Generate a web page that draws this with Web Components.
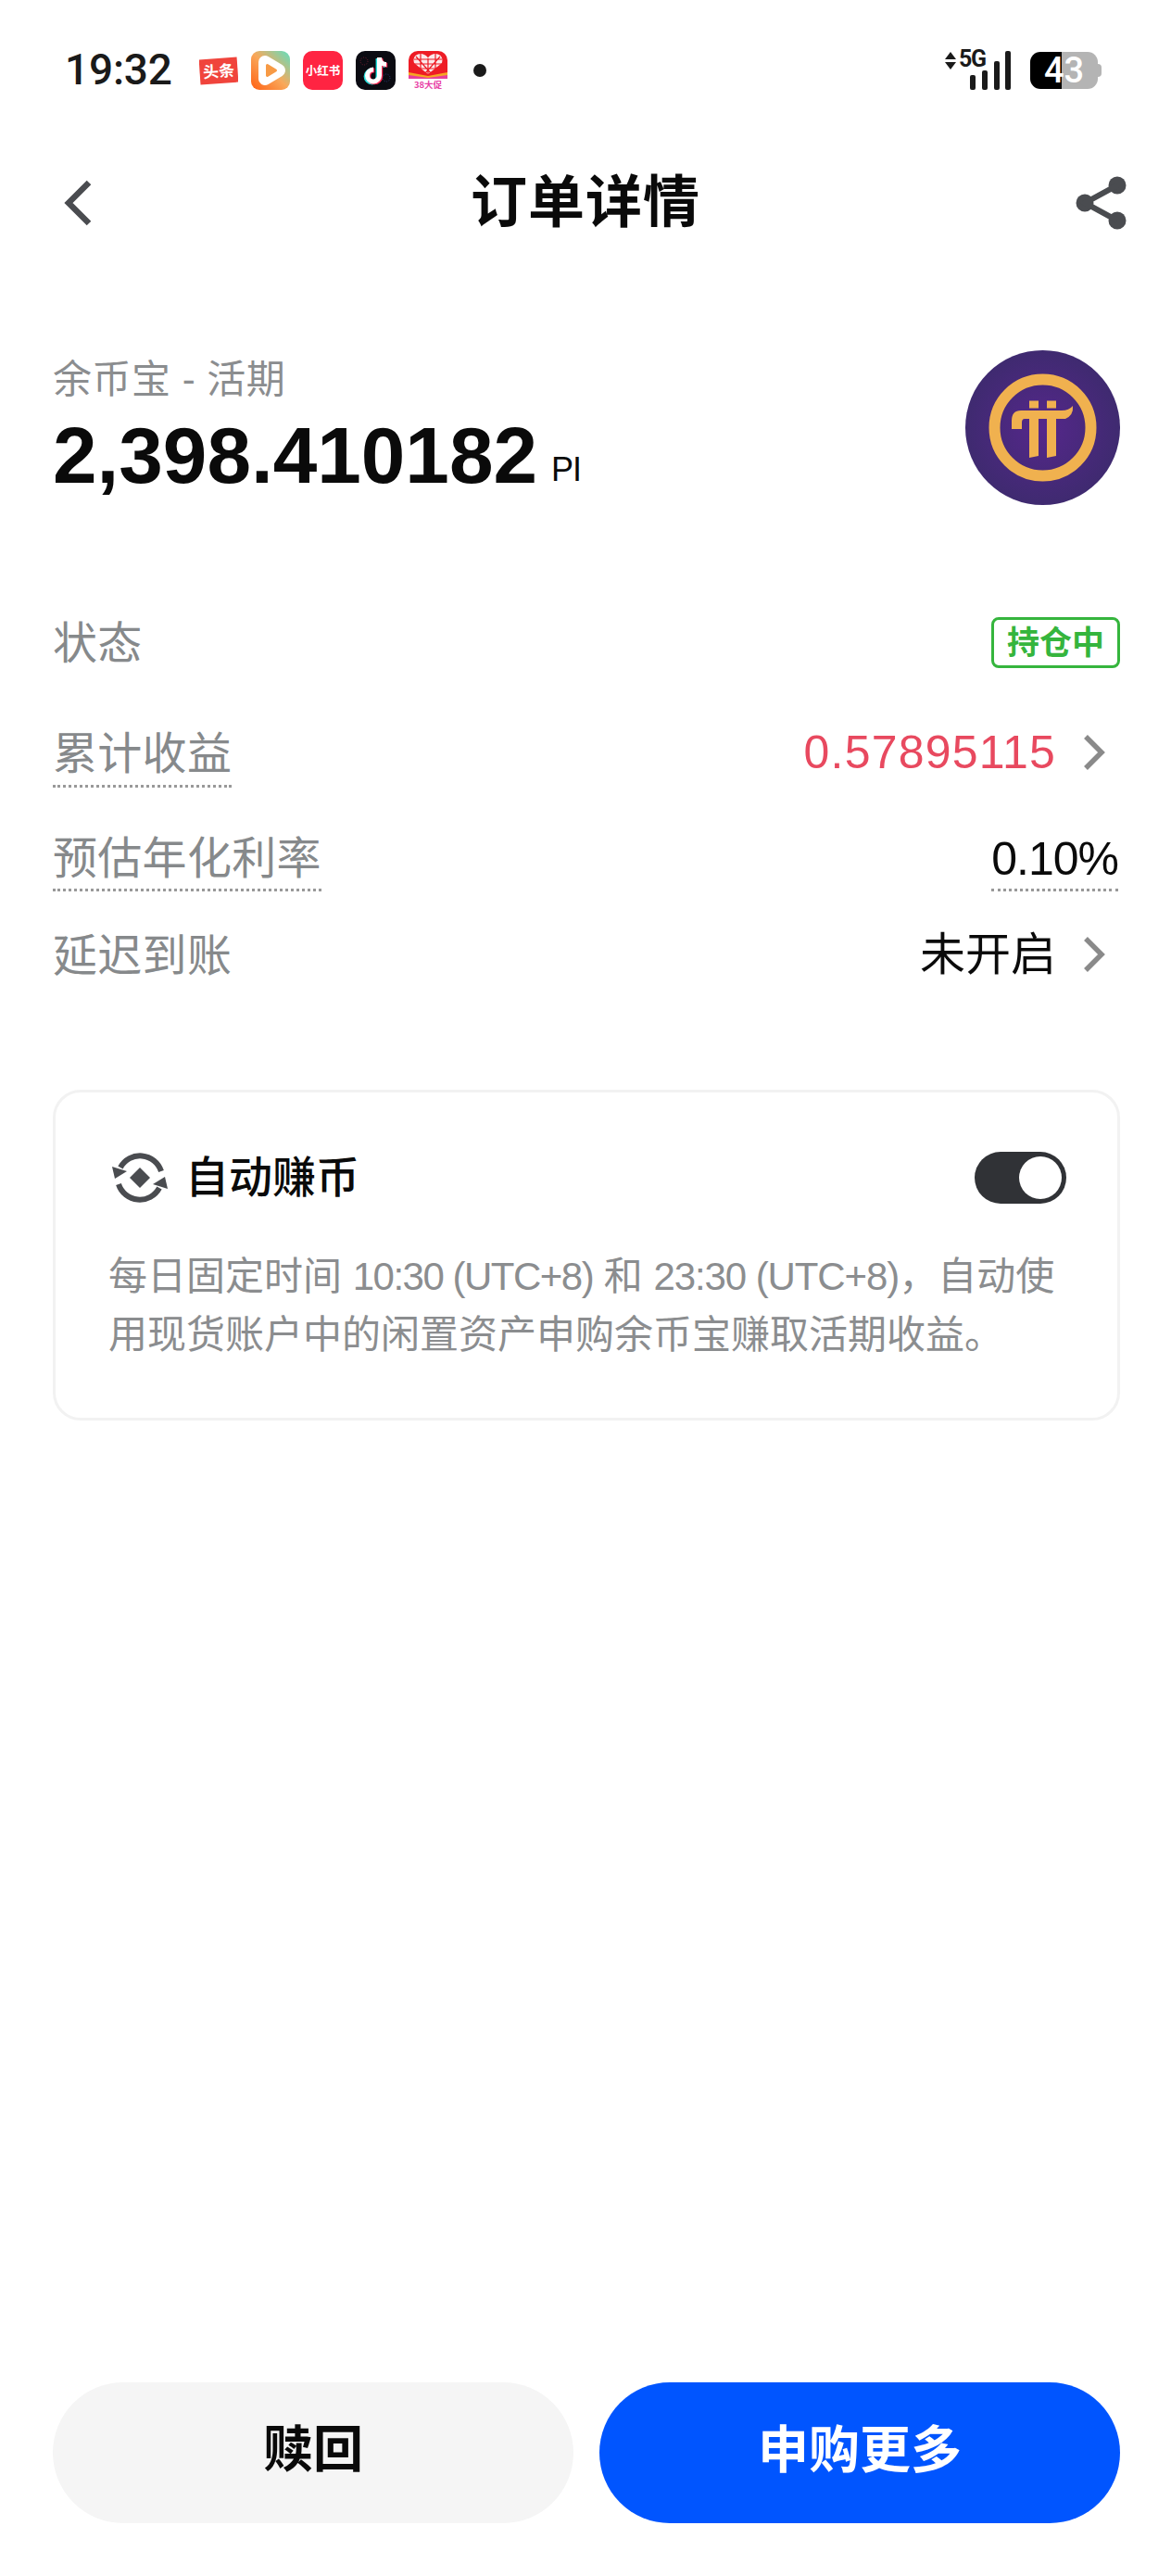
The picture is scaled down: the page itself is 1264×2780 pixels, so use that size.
<!DOCTYPE html>
<html lang="zh-CN">
<head>
<meta charset="utf-8">
<title>订单详情</title>
<style>
  html, body { margin: 0; padding: 0; background: #fff; }
  body { font-family: "Liberation Sans", "Noto Sans CJK SC", sans-serif; color: #0a0a0a; }
</style>
</head>
<body>
<order-app>
  <status-bar></status-bar>
  <nav-bar>订单详情</nav-bar>
  <asset-head></asset-head>
  <info-row label="状态" style="--top:118px"><state-badge>持仓中</state-badge></info-row>
  <info-row label="累计收益" dotted chevron style="--top:57px;--pad:3px;--value:#e8495f;--fs:50px;--ls:1.2px">0.57895115</info-row>
  <info-row label="预估年化利率" dotted dotted-value style="--top:45px;--pad:2px;--vt:2px;--end:57px;--fs:50px;--ls:-1px">0.10%</info-row>
  <info-row label="延迟到账" chevron style="--top:38px;--fs:49px">未开启</info-row>
  <earn-card title-text="自动赚币">每日固定时间 <span style="letter-spacing:-1.5px">10:30 (UTC+8)</span> 和 <span style="letter-spacing:-1.1px">23:30 (UTC+8)</span>，自动使<br>用现货账户中的闲置资产申购余币宝赚取活期收益。</earn-card>
  <action-bar>
    <pill-button>赎回</pill-button>
    <pill-button primary>申购更多</pill-button>
  </action-bar>
</order-app>

<script>
const CJK = '"Liberation Sans","Noto Sans CJK SC",sans-serif';

function shadow(el, html) {
  el.attachShadow({ mode: 'open' }).innerHTML = html;
}

customElements.define('order-app', class extends HTMLElement {
  constructor() {
    super();
    shadow(this, `<style>
      :host { display:flex; flex-direction:column; width:1264px; height:2780px; overflow:hidden; background:#fff; }
      ::slotted(*) { flex:none; }
    </style><slot></slot>`);
  }
});

customElements.define('status-bar', class extends HTMLElement {
  constructor() {
    super();
    shadow(this, `<style>
      :host { display:flex; align-items:center; height:42px; margin-top:55px; padding:0 75px 0 70px; }
      .time { font:500 46px/38px Roboto,sans-serif; color:#1a1a1a; width:114px; margin-right:31px; margin-bottom:3px; white-space:nowrap; letter-spacing:-0.2px; }
      .apps { display:flex; align-items:center; gap:14px; }
      svg { display:block; flex:none; }
      .dot { width:14px; height:14px; border-radius:50%; background:#1a1a1a; margin-left:28px; margin-bottom:1px; margin-right:0; }
      .net { position:relative; width:72px; height:42px; margin-left:auto; margin-right:20px; }
      .five { position:absolute; left:15px; top:-2px; font:700 25px/22px Roboto,sans-serif; letter-spacing:-1.4px; color:#1a1a1a; }
      .bat { position:relative; width:73px; height:40px; border-radius:11px; margin-right:4px;
             background:linear-gradient(90deg,#000 0 34px,#b4b4b4 34px);
             display:flex; align-items:center; justify-content:center;
             font:500 38px/40px Roboto,sans-serif; color:#fff; }
      .bat::after { content:""; position:absolute; right:-4px; top:13px; width:4px; height:14px; border-radius:0 4px 4px 0; background:#b4b4b4; }
    </style>
    <div class="time">19:32</div>
    <div class="apps">
      <svg width="42" height="42" viewBox="0 0 42 42">
        <g transform="rotate(-4 21 21)"><rect x="0.5" y="8" width="41" height="27" fill="#f0443c"/>
        <text x="21" y="28" text-anchor="middle" font-family='"Noto Sans CJK SC"' font-weight="700" font-size="17" fill="#fff">头条</text></g>
      </svg>
      <svg width="42" height="42" viewBox="0 0 42 42">
        <defs><linearGradient id="v" x1="0" y1="1" x2="1" y2="0">
          <stop offset="0" stop-color="#ff5f12"/><stop offset=".5" stop-color="#f9a85a"/><stop offset="1" stop-color="#5fdfc0"/>
        </linearGradient></defs>
        <rect width="42" height="42" rx="9" fill="url(#v)"/>
        <path d="M15 12 L30 21 L15 30Z" fill="#fff" stroke="#fff" stroke-width="14" stroke-linejoin="round"/>
        <path d="M17.5 15.5 L26.5 21 L17.5 26.5Z" fill="#f79a45" stroke="#f79a45" stroke-width="3" stroke-linejoin="round"/>
      </svg>
      <svg width="43" height="42" viewBox="0 0 43 42">
        <rect width="43" height="42" rx="10" fill="#ff2442"/>
        <text x="21.5" y="26" text-anchor="middle" font-family='"Noto Sans CJK SC"' font-weight="700" font-size="12.5" fill="#fff">小红书</text>
      </svg>
      <svg width="43" height="42" viewBox="0 0 43 42">
        <rect width="43" height="42" rx="10" fill="#0b0b12"/>
        <circle cx="9" cy="11" r="4" fill="none" stroke="#7a1f33" stroke-width="1" stroke-dasharray="1 1.5"/>
        <circle cx="33" cy="29" r="4" fill="none" stroke="#2b3a78" stroke-width="1" stroke-dasharray="1 1.5"/>
        <g fill="none" stroke-width="5">
          <path d="M25.5 8v18.5a6.5 6.5 0 1 1-6.5-6.5" stroke="#25e2df" transform="translate(-1.4 1)"/>
          <path d="M25.5 7c0 4.5 3 7.5 7.5 7.5" stroke="#25e2df" transform="translate(-1.4 1)"/>
          <path d="M25.5 8v18.5a6.5 6.5 0 1 1-6.5-6.5" stroke="#fe2c55" transform="translate(1.2 .8)"/>
          <path d="M25.5 7c0 4.5 3 7.5 7.5 7.5" stroke="#fe2c55" transform="translate(1.2 .8)"/>
          <path d="M25.5 8v18.5a6.5 6.5 0 1 1-6.5-6.5" stroke="#fff"/>
          <path d="M25.5 7c0 4.5 3 7.5 7.5 7.5" stroke="#fff"/>
        </g>
      </svg>
      <svg width="42" height="42" viewBox="0 0 42 42">
        <path d="M0 29V10A10 10 0 0 1 10 0H32A10 10 0 0 1 42 10V29Z" fill="#ee1c25"/>
        <path d="M21 25 L6 13 C4 6 9 2.5 14 3 C17.5 3.5 20 5.5 21 7.5 C22 5.5 24.5 3.5 28 3 C33 2.5 38 6 36 13Z" fill="#fbe9ea"/>
        <g stroke="#ee1c25" stroke-width="1.2" fill="none">
          <path d="M21 8V25M13 3V19M29 3V19M6 9H36M6 14H36M10 19H32M8 6L24 24M34 6L18 24"/>
        </g>
        <path d="M0 23L21 27L42 23V29H0Z" fill="#f5a623"/>
        <path d="M0 26L21 29L42 26V30H0Z" fill="#e83e9b"/>
        <text x="21" y="39.5" text-anchor="middle" font-family='"Noto Sans CJK SC"' font-weight="700" font-size="9.5" fill="#e83ea5">38大促</text>
      </svg>
    </div>
    <div class="dot"></div>
    <div class="net">
      <svg width="72" height="42" viewBox="0 0 72 42">
        <path d="M6 0L12 8H0ZM6 19L12 11H0Z" fill="#1a1a1a" transform="translate(0 1)"/>
        <g fill="#1a1a1a">
          <rect x="27" y="26" width="6" height="16" rx="2"/>
          <rect x="40" y="21" width="6" height="21" rx="2"/>
          <rect x="53" y="11" width="6" height="31" rx="2"/>
          <rect x="65" y="0" width="6" height="42" rx="2"/>
        </g>
      </svg>
      <span class="five">5G</span>
    </div>
    <div class="bat">43</div>`);
  }
});

customElements.define('nav-bar', class extends HTMLElement {
  constructor() {
    super();
    shadow(this, `<style>
      :host { display:grid; grid-template-columns:1fr auto 1fr; align-items:center; height:120px; margin-top:62px; padding:0 48px 0 68px; }
      .t { font:700 61px/120px ${CJK}; color:#0a0a0a; letter-spacing:1px; position:relative; left:-10px; }
      svg { display:block; }
      .r { justify-self:end; }
    </style>
    <svg width="32" height="50" viewBox="0 0 32 50"><path d="M28 3 L6 25 L28 47" fill="none" stroke="#4a4c50" stroke-width="6.5"/></svg>
    <div class="t"><slot></slot></div>
    <svg class="r" width="56" height="58" viewBox="0 0 56 58">
      <g fill="#4a4c50"><circle cx="46" cy="10" r="9.5"/><circle cx="11" cy="29" r="9.5"/><circle cx="46" cy="48" r="9.5"/></g>
      <path d="M46 10L11 29L46 48" fill="none" stroke="#4a4c50" stroke-width="6"/>
    </svg>`);
  }
});

customElements.define('asset-head', class extends HTMLElement {
  constructor() {
    super();
    shadow(this, `<style>
      :host { display:flex; justify-content:space-between; margin-top:99px; padding:0 55px 0 57px; }
      .col { padding-top:8px; }
      .k { font:400 42px/48px ${CJK}; color:#8b8d8f; white-space:pre; letter-spacing:0.5px; }
      .v { display:flex; align-items:baseline; margin-top:13px; font:700 85.5px/90px "Liberation Sans",sans-serif; color:#0a0a0a; white-space:nowrap; }
      .u { font:400 36px/36px "Liberation Sans",sans-serif; margin-left:15px; letter-spacing:-1px; position:relative; top:-2px; }
      svg { display:block; flex:none; }
    </style>
    <div class="col">
      <div class="k">余币宝 - 活期</div>
      <div class="v">2,398.410182<span class="u">PI</span></div>
    </div>
    <svg width="167" height="167" viewBox="0 0 167 167">
      <defs><radialGradient id="p"><stop offset="0" stop-color="#55278b"/><stop offset="1" stop-color="#3f2a70"/></radialGradient></defs>
      <circle cx="83.5" cy="83.5" r="83.5" fill="url(#p)"/>
      <circle cx="83.5" cy="83.5" r="52" fill="none" stroke="#f0b14f" stroke-width="12"/>
      <g fill="#f0b14f">
        <rect x="69" y="54.5" width="10" height="8"/><rect x="88" y="54.5" width="10" height="8"/>
        <path d="M50 85V76Q50 65 60 65H104Q112 65 116 60Q117 70 108 74H98V114L88 116V74H79V114L69 116V74H64Q61 74 61 78V85Z"/>
      </g>
    </svg>`);
  }
});

customElements.define('state-badge', class extends HTMLElement {
  constructor() {
    super();
    shadow(this, `<style>
      :host { display:flex; align-items:center; justify-content:center; box-sizing:border-box; width:139px; height:55px; margin-top:1px;
              border:3px solid #35b53d; border-radius:8px; font:700 35px/49px ${CJK}; color:#35b53d; }
    </style><slot></slot>`);
  }
});

customElements.define('info-row', class extends HTMLElement {
  constructor() {
    super();
    const chev = this.hasAttribute('chevron')
      ? `<svg width="26" height="40" viewBox="0 0 26 40"><path d="M4 3 L21 20 L4 37" fill="none" stroke="#8a8a8a" stroke-width="5.5"/></svg>` : '';
    const dl = this.hasAttribute('dotted') ? ' dotted' : '';
    const dv = this.hasAttribute('dotted-value') ? ' dotted' : '';
    shadow(this, `<style>
      :host { display:flex; justify-content:space-between; align-items:flex-start; margin-top:var(--top,0); padding:0 var(--end,55px) 0 57px; }
      .l { font:400 48px/60px ${CJK}; color:#86898b; padding-top:2px; padding-bottom:var(--pad,0); letter-spacing:0.3px; }
      .dotted { border-bottom:3px dotted #999; }
      .r { display:flex; align-items:center; height:60px; }
      .v { font:400 var(--fs,48px)/60px ${CJK}; color:var(--value,#0a0a0a); letter-spacing:var(--ls,0); }
      .v.dotted { padding-top:var(--vt,0); padding-bottom:var(--pad,0); }
      .r.hasdot { height:auto; }
      svg { display:block; margin-left:28px; margin-right:15px; }
    </style>
    <div class="l${dl}">${this.getAttribute('label')}</div>
    <div class="r${dv ? ' hasdot' : ''}"><div class="v${dv}"><slot></slot></div>${chev}</div>`);
  }
});

customElements.define('earn-card', class extends HTMLElement {
  constructor() {
    super();
    shadow(this, `<style>
      :host { display:block; box-sizing:border-box; margin:114px 55px 0 57px; height:357px; border:3px solid #f2f2f2; border-radius:30px; padding:64px 55px 0 57px; }
      .h { display:flex; align-items:center; height:56px; }
      svg { display:block; margin-left:3px; flex:none; }
      .t { font:500 47px/56px ${CJK}; color:#0a0a0a; margin-left:18px; flex:1; }
      .d { margin-top:47px; font:400 42px/63px ${CJK}; color:#8b8d8f; white-space:nowrap; }
    </style>
    <div class="h">
      <svg width="62" height="56" viewBox="0 0 62 56">
        <g fill="none" stroke="#4a4c50" stroke-width="6">
          <path d="M10 17A24 24 0 0 1 54 21"/><path d="M52 39A24 24 0 0 1 8 35"/>
        </g>
        <g fill="#4a4c50">
          <path d="M1 16L17 21L4 29Z"/><path d="M61 40L45 35L58 27Z"/>
          <path d="M31 17L42 28L31 39L20 28Z"/>
        </g>
      </svg>
      <div class="t">${this.getAttribute('title-text')}</div>
      <toggle-switch></toggle-switch>
    </div>
    <div class="d"><slot></slot></div>`);
  }
});

customElements.define('toggle-switch', class extends HTMLElement {
  constructor() {
    super();
    shadow(this, `<style>
      :host { display:flex; align-items:center; justify-content:flex-end; box-sizing:border-box; width:99px; height:56px; border-radius:28px; background:#303236; padding-right:5px; }
      i { display:block; width:46px; height:46px; border-radius:50%; background:#fff; }
    </style><i></i>`);
  }
});

customElements.define('action-bar', class extends HTMLElement {
  constructor() {
    super();
    shadow(this, `<style>
      :host { display:flex; gap:28px; margin-top:auto; padding:0 55px 57px 57px; }
    </style><slot></slot>`);
  }
});

customElements.define('pill-button', class extends HTMLElement {
  constructor() {
    super();
    const p = this.hasAttribute('primary');
    shadow(this, `<style>
      :host { flex:1; display:flex; align-items:center; justify-content:center; box-sizing:border-box; height:152px; padding-bottom:7px; border-radius:76px;
              background:${p ? '#0055ff' : '#f5f5f5'}; color:${p ? '#fff' : '#0a0a0a'};
              font:700 ${p ? 55 : 54}px/60px ${CJK}; }
    </style><slot></slot>`);
  }
});
</script>
</body>
</html>
